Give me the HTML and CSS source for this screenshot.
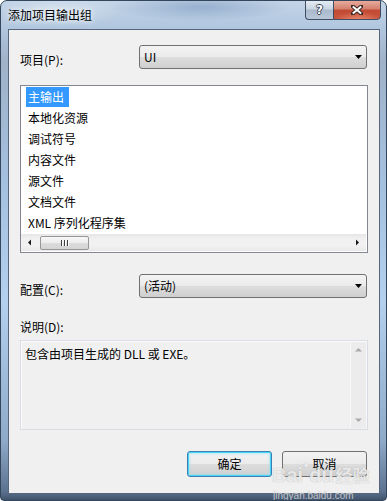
FILE: index.html
```html
<!DOCTYPE html>
<html lang="zh-CN">
<head>
<meta charset="utf-8">
<title>添加项目输出组</title>
<link rel="stylesheet" href="styles.css">
</head>
<body>
<div class="window">
  <div class="titlebar">
    <span class="title">添加项目输出组</span>
    <div class="caption">
      <div class="cap-btn cap-help"><span class="q">?</span></div>
      <div class="cap-btn cap-close">
        <svg width="12" height="10" viewBox="0 0 12 10"><path d="M1.5 1.2 L10.5 8.8 M10.5 1.2 L1.5 8.8" stroke="#3a2a28" stroke-width="4" stroke-linecap="square" fill="none"/><path d="M1.8 1.5 L10.2 8.5 M10.2 1.5 L1.8 8.5" stroke="#fff" stroke-width="2" fill="none"/></svg>
      </div>
    </div>
  </div>
  <div class="client">
    <div class="row">
      <div class="label lbl1">项目(P):</div>
      <div class="combo"><span>UI</span><svg class="drop" width="7" height="4" viewBox="0 0 7 4"><path d="M0 0 H7 L3.5 4 Z" fill="#000"/></svg></div>
    </div>
    <div class="list">
      <div class="item"><span class="sel">主输出</span></div>
      <div class="item"><span>本地化资源</span></div>
      <div class="item"><span>调试符号</span></div>
      <div class="item"><span>内容文件</span></div>
      <div class="item"><span>源文件</span></div>
      <div class="item"><span>文档文件</span></div>
      <div class="item"><span>XML 序列化程序集</span></div>
      <div class="spacer"></div>
      <div class="hscroll">
        <svg class="arr" width="17" height="17" viewBox="0 0 17 17"><path d="M7 8.5 L10 5.5 V11.5 Z" fill="#1a1a1a"/></svg>
        <div class="thumb"><span class="grip"></span><span class="grip"></span><span class="grip"></span></div>
        <div class="track"></div>
        <svg class="arr" width="17" height="17" viewBox="0 0 17 17"><path d="M10 8.5 L7 5.5 V11.5 Z" fill="#1a1a1a"/></svg>
      </div>
    </div>
    <div class="row row2">
      <div class="label lbl2">配置(C):</div>
      <div class="combo"><span>(活动)</span><svg class="drop" width="7" height="4" viewBox="0 0 7 4"><path d="M0 0 H7 L3.5 4 Z" fill="#000"/></svg></div>
    </div>
    <div class="label desc-label">说明(D):</div>
    <div class="desc">
      <div class="desc-text">包含由项目生成的 DLL 或 EXE。</div>
      <div class="vscroll">
        <svg width="17" height="17" viewBox="0 0 17 17"><path d="M8.5 6 L12 9.5 H5 Z" fill="#a8a8a8"/></svg>
        <svg width="17" height="17" viewBox="0 0 17 17"><path d="M8.5 11 L12 7.5 H5 Z" fill="#a8a8a8"/></svg>
      </div>
    </div>
    <div class="buttons">
      <div class="btn btn-default">确定</div>
      <div class="btn">取消</div>
    </div>
  </div>
  <div class="watermark">
    <div class="wm-logo">Bai<span class="wm-paw">&#x25CF;</span>du<span class="wm-cn">经验</span></div>
    <div class="wm-url">jingyan.baidu.com</div>
  </div>
</div>
</body>
</html>
```
FILE: styles.css
```css
* { box-sizing: border-box; }

body {
  margin: 0;
  font-family: "Noto Sans CJK SC", "Noto Sans", sans-serif;
  font-size: 12px;
  color: #000;
  background: #fff;
}

.window {
  position: relative;
  width: 387px;
  height: 501px;
  border: 1px solid #34465c;
  border-radius: 7px 7px 4px 4px;
  display: flex;
  flex-direction: column;
  overflow: hidden;
  background:
    radial-gradient(ellipse 90px 14px at 200px 6px, rgba(120,150,190,0.55), rgba(120,150,190,0) 100%),
    radial-gradient(ellipse 60px 16px at 60px 10px, rgba(255,255,255,0.35), rgba(255,255,255,0) 100%),
    linear-gradient(to bottom, #c3d4e7 0, #b0c6de 28px, #9fb2c8 60px, #a5c0df 180px, #b4d0ee 300px, #8fa9c8 440px, #5c7390 490px, #3e5069 500px);
}

.titlebar {
  height: 28px;
  flex: none;
  display: flex;
  justify-content: space-between;
  align-items: flex-start;
  padding-left: 7px;
}

.title {
  line-height: 28px;
  font-size: 12px;
  color: #000;
  text-shadow: 0 0 5px rgba(255,255,255,0.9), 0 0 8px rgba(255,255,255,0.7);
}

.caption {
  display: flex;
  margin-top: -1px;
  margin-right: 5px;
}

.cap-btn {
  height: 20px;
  border: 1px solid #3f4e63;
  display: flex;
  align-items: center;
  justify-content: center;
}

.cap-help {
  width: 28px;
  border-right: none;
  border-radius: 0 0 0 4px;
  background: linear-gradient(to bottom, #e4ebf3 0, #c9d5e2 45%, #a9b8ca 50%, #b9c8d9 100%);
}

.q {
  font-family: "DejaVu Sans", sans-serif;
  font-weight: bold;
  font-size: 12px;
  line-height: 12px;
  color: #fff;
  text-shadow: 1px 0 0 #3b4656, -1px 0 0 #3b4656, 0 1px 0 #3b4656, 0 -1px 0 #3b4656;
}

.cap-close {
  width: 48px;
  border-radius: 0 0 4px 0;
  background:
    radial-gradient(ellipse 24px 8px at 24px 19px, rgba(240,150,120,0.8), rgba(240,150,120,0) 100%),
    linear-gradient(to bottom, #e8ab9c 0, #d47f6c 45%, #c24a35 50%, #c8533c 100%);
}

.client {
  flex: 1;
  margin: 0 6px 6px 7px;
  border: 1px solid #56677c;
  background: #f0f0f0;
  padding: 15px 11px 0 11px;
  display: flex;
  flex-direction: column;
}

.row {
  display: flex;
  height: 24px;
  flex: none;
}

.label {
  width: 119px;
  line-height: 16px;
  flex: none;
}

.lbl1 { padding-top: 7px; }
.lbl2 { padding-top: 8px; }

.combo {
  width: 228px;
  height: 24px;
  border: 1px solid #707070;
  border-radius: 3px;
  background: linear-gradient(to bottom, #f3f3f3 0, #ebebeb 48%, #dddddd 52%, #cfcfcf 100%);
  display: flex;
  align-items: center;
  justify-content: space-between;
  padding: 0 4px 0 4px;
  line-height: 16px;
}

.drop { margin-right: 0; }

.list {
  margin-top: 16px;
  height: 168px;
  flex: none;
  border: 1px solid #828790;
  background: #fff;
  display: flex;
  flex-direction: column;
  padding-top: 1px;
}

.item {
  height: 21px;
  flex: none;
  padding-left: 5px;
}

.item span {
  display: inline-block;
  height: 20px;
  line-height: 20px;
  padding: 0 5px 0 2px;
}

.item .sel {
  background: #3399ff;
  color: #fff;
}

.spacer { flex: 1; }

.hscroll {
  height: 17px;
  flex: none;
  margin: 0 1px 1px 0;
  display: flex;
  align-items: center;
  background: linear-gradient(to bottom, #e6e6e6 0, #f1f1f1 30%, #f1f1f1 70%, #e8e8e8 100%);
}

.hscroll .arr { flex: none; }

.thumb {
  width: 49px;
  height: 14px;
  margin-left: 2px;
  border: 1px solid #979797;
  border-radius: 2px;
  background: linear-gradient(to bottom, #f7f7f7 0, #ececec 50%, #dcdcdc 51%, #d4d4d4 100%);
  display: flex;
  justify-content: center;
  align-items: center;
  gap: 1px;
}

.grip {
  width: 1px;
  height: 6px;
  background: #404040;
  box-shadow: 1px 0 0 #fff;
  margin: 0 1px 0 0;
}

.track { flex: 1; }

.row2 { margin-top: 21px; }

.desc-label {
  margin-top: 21px;
  width: auto;
}

.desc {
  margin-top: 5px;
  height: 90px;
  flex: none;
  border: 1px solid #d8dde3;
  box-shadow: inset 1px 1px 0 #fbfbfb;
  background: #f0f0f0;
  display: flex;
}

.desc-text {
  flex: 1;
  padding: 5px 4px;
  line-height: 16px;
}

.vscroll {
  width: 17px;
  margin: 1px 0;
  background: #ececec;
  border-left: 1px solid #f7f7f7;
  border-right: 1px solid #f7f7f7;
  display: flex;
  flex-direction: column;
  justify-content: space-between;
  align-items: center;
}

.buttons {
  margin-top: 21px;
  display: flex;
  justify-content: flex-end;
  gap: 10px;
  padding-right: 1px;
}

.btn {
  width: 85px;
  height: 26px;
  border: 1px solid #707070;
  border-radius: 3px;
  background: linear-gradient(to bottom, #f2f2f2 0, #ebebeb 48%, #dddddd 52%, #cfcfcf 100%);
  display: flex;
  align-items: center;
  justify-content: center;
  line-height: 16px;
}

.btn-default {
  border-color: #3c7fb1;
  box-shadow: inset 0 0 0 1px #48d4f5, inset 0 0 2px 2px rgba(140,225,250,0.5);
}

.watermark {
  position: absolute;
  left: 271px;
  top: 444px;
  color: rgba(255,255,255,0.75);
  text-shadow: 0 0 1px rgba(120,120,120,0.6);
  pointer-events: none;
}

.wm-logo {
  font-family: "Liberation Sans", sans-serif;
  font-size: 20px;
  font-weight: bold;
  line-height: 24px;
  margin-top: 8px;
  white-space: nowrap;
}

.wm-paw {
  font-size: 10px;
  vertical-align: 14px;
}

.wm-cn {
  font-family: "Noto Sans CJK SC", sans-serif;
  font-size: 17px;
  margin-left: 2px;
}

.wm-url {
  font-family: "Liberation Sans", sans-serif;
  font-size: 10px;
  line-height: 12px;
  margin-top: 3px;
  padding-left: 1px;
  color: rgba(255,255,255,0.6);
}
```
